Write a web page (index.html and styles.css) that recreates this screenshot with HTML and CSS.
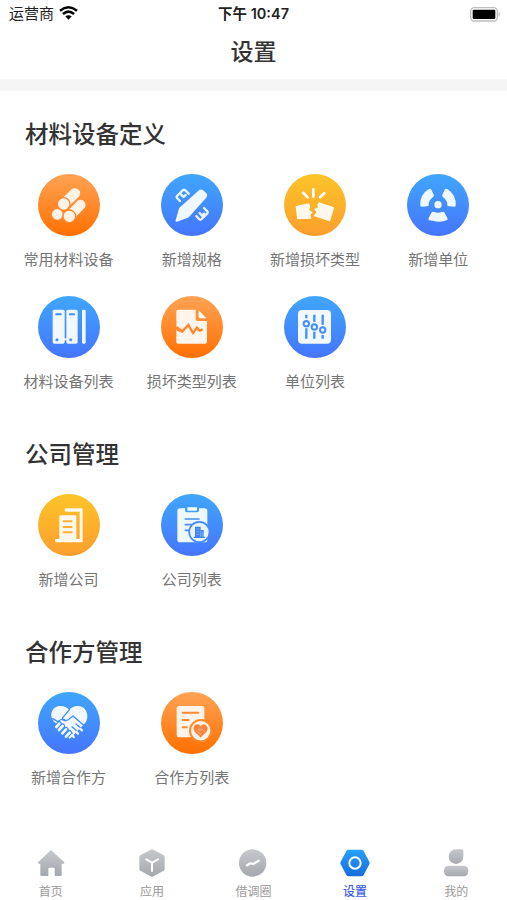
FILE: index.html
```html
<!DOCTYPE html>
<html lang="zh-CN">
<head>
<meta charset="utf-8">
<title>设置</title>
<link rel="stylesheet" href="styles.css">
</head>
<body>
<svg class="defs" width="0" height="0" aria-hidden="true">
  <defs>
    <linearGradient id="gray" x1="0" y1="0" x2="0" y2="1"><stop offset="0" stop-color="#c6c8cc"/><stop offset="1" stop-color="#a4a8ae"/></linearGradient>
    <linearGradient id="active" x1="0" y1="0" x2="0" y2="1"><stop offset="0" stop-color="#28a0fa"/><stop offset="1" stop-color="#176cdd"/></linearGradient>
  </defs>
</svg>
<div class="screen">
  <header>
    <div class="status">
      <div class="carrier"><span>运营商</span>
        <svg width="19" height="14" viewBox="0 0 57 42"><g fill="none" stroke="#000" stroke-width="7.5"><path d="M3 14Q28.500 -6 54 14"/><path d="M12 24Q28.500 10 45 24"/></g><path d="M19 31Q28.500 24 38 31L28.500 41Z"/></svg>
      </div>
      <div class="time">下午 10:47</div>
      <div class="battery"><svg width="31" height="15" viewBox="0 0 93 45"><rect x="2" y="2" width="80" height="40" rx="11" fill="#fff" stroke="#bdbdbd" stroke-width="4"/><rect x="8" y="8" width="68" height="28" rx="4"/><path d="M86 15q7 7 0 14z" fill="#aaa"/></svg></div>
    </div>
    <h1>设置</h1>
  </header>
  <main>
    <section>
      <h2>材料设备定义</h2>
      <div class="grid">
        <div class="item"><div class="disc orange"><svg viewBox="53 26 186 186">
          <g stroke-linecap="round" stroke="#fff3e8"><path d="M131 115L164 84" stroke-width="31"/><path d="M148 152L180 119" stroke-width="31"/></g>
          <g fill="#fff3e8" stroke="#ff8930" stroke-width="4"><circle cx="111" cy="147" r="18"/><circle cx="130" cy="116" r="19"/><circle cx="147" cy="153" r="19"/></g>
        </svg></div><span>常用材料设备</span></div>
        <div class="item"><div class="disc blue"><svg viewBox="61 26 186 186">
          <path d="M175 75q6-5 12 0l10 9q6 6 1 12l-51 57q-3 4-7 5l-31 11q-6 2-4-5l9-31q1-4 4-7z" fill="#f0f8ff"/>
          <g fill="none" stroke="#e8f4ff" stroke-width="7" stroke-linecap="round" stroke-linejoin="round"><path d="M118 107l-9-9q-3-3 0-6l17-17q4-4 8 0l10 10M121 87l8 8M129 95l6-6"/><path d="M190 128l10 10q3 3 0 6l-17 17q-4 4-8 0l-8-9M177 143l7 8M184 151l6-6"/></g>
        </svg></div><span>新增规格</span></div>
        <div class="item"><div class="disc yellow"><svg viewBox="67 26 186 186">
          <g fill="#fff8ee"><path d="M105 121l37-7 4 11-4 9 11 7-7 8 3 11-39 2q-3 0-4-3l-4-35q0-2 3-3z"/><path d="M172 111l41 13q4 1 4 5l-11 36q-1 4-5 2l-45-15 8-11-7-10 13-5-3-8z"/></g>
          <path d="M155 72v22M125 83l13 13M188 84l-13 12" stroke="#fff" stroke-width="8" stroke-linecap="round"/>
        </svg></div><span>新增损坏类型</span></div>
        <div class="item"><div class="disc blue"><svg viewBox="67 26 186 186">
          <g fill="#f0f8ff"><circle cx="160" cy="118" r="11"/><path d="M144 166q-6 0-10-1-5-2-2-7l8-15q3-5 8-3 12 4 24 0 5-2 8 3l8 15q3 5-2 7-18 8-42 1z"/><path d="M107 121q-3-32 25-50 5-3 8 2l7 15q2 4-2 7-13 9-13 24 0 4-5 4l-15 1q-5 0-5-3z"/><path d="M213 121q3-32-25-50-5-3-8 2l-7 15q-2 4 2 7 13 9 13 24 0 4 5 4l15 1q5 0 5-3z"/></g>
        </svg></div><span>新增单位</span></div>
        <div class="item"><div class="disc blue"><svg viewBox="70 24 186 186">
          <g fill="#f1f8ff"><rect x="114" y="65" width="36" height="102" rx="5"/><rect x="155" y="65" width="34" height="102" rx="5"/><rect x="202" y="65" width="11" height="102" rx="4"/><path d="M145 151h14v6h-14z"/></g>
          <g fill="#438ffc"><rect x="122" y="76" width="19" height="6" rx="1"/><rect x="163" y="76" width="18" height="6" rx="1"/><circle cx="127" cy="155" r="4.500"/><circle cx="168" cy="155" r="4.500"/></g>
        </svg></div><span>材料设备列表</span></div>
        <div class="item"><div class="disc orange"><svg viewBox="441 24 186 186">
          <path d="M492 65h53v29q0 5 5 5h29v63q0 5-5 5h-82q-5 0-5-5V70q0-5 5-5z" fill="#fff5ec"/><path d="M554 67v19q0 5 5 5h18z" fill="#fff"/>
          <path d="M487 117l18 13 18-19 14 24 12-16 8 9 9-4" fill="none" stroke="#ff8428" stroke-width="7"/><path d="M487 119l17 16-17-8z" fill="#ff8428"/>
        </svg></div><span>损坏类型列表</span></div>
        <div class="item"><div class="disc blue"><svg viewBox="66 24 186 186">
          <rect x="108" y="66" width="99" height="101" rx="12" fill="#f2f8ff"/>
          <path d="M133 80v11M133 121v31M157 80v21M157 131v21M182 80v30M182 141v11" stroke="#438ffc" stroke-width="7"/>
          <g fill="#f2f8ff" stroke="#438ffc" stroke-width="6"><circle cx="133" cy="107" r="8"/><circle cx="157" cy="117" r="8"/><circle cx="182" cy="126" r="8"/></g>
        </svg></div><span>单位列表</span></div>
      </div>
    </section>
    <section>
      <h2>公司管理</h2>
      <div class="grid">
        <div class="item"><div class="disc yellow"><svg viewBox="69 176 186 186">
          <path d="M153 219h46q4 0 4 4v98h-79q-4 0-4-4v-6h13v-67q0-4 4-4h43q4 0 4 4v67h10v-82h-41q-4 0-4-4v-2q0-4 4-4z" fill="#fff8ef"/>
          <path d="M146 258h24M146 275h24M146 291h24" stroke="#fcb12d" stroke-width="6" stroke-linecap="round"/>
        </svg></div><span>新增公司</span></div>
        <div class="item"><div class="disc blue"><svg viewBox="440 176 186 186">
          <path d="M497 219h15v6q0 6 6 6h30q6 0 6-6v-6h17q8 0 8 8v86q0 8-8 8h-74q-8 0-8-8v-86q0-8 8-8z" fill="#eff7ff"/><path d="M519 216h29v7q0 3-3 3h-23q-3 0-3-3z" fill="#f6fbff"/>
          <path d="M511 251h45M511 268h23M511 285h13" stroke="#438ffc" stroke-width="5"/>
          <circle cx="555" cy="290" r="33" fill="#438bfc"/><circle cx="555" cy="290" r="28" fill="#eaf3ff"/>
          <path d="M542 274h17v10h9v20h4v4h-34v-4h4z" fill="#3f84f2"/><path d="M546 281h9M546 289h9M546 297h9M559 287v17M564 290v14" stroke="#95bfff" stroke-width="2"/>
        </svg></div><span>公司列表</span></div>
      </div>
    </section>
    <section>
      <h2>合作方管理</h2>
      <div class="grid">
        <div class="item"><div class="disc blue"><svg viewBox="69 170 186 186">
          <path d="M163 224C150 207 119 207 111 228c-5 13-1 25 10 34l43 49 43-44c13-12 12-30 5-42-10-18-38-16-49-1z" fill="#f1f8ff"/>
          <path d="M164 222l-21 25q-3 6 4 8 10 3 18-6l9-7 32 28M113 250l15 9q15-12 22-5M183 266l16 14M171 274l15 14M158 281l14 14" fill="none" stroke="#438ffc" stroke-width="4" stroke-linecap="round" stroke-linejoin="round"/>
          <path d="M124 275l9-10M132 284l11-12M142 294l11-12M153 304l11-12" stroke="#438cfc" stroke-width="15" stroke-linecap="round"/>
          <path d="M124 275l9-10M132 284l11-12M142 294l11-12M153 304l11-12" stroke="#f1f8ff" stroke-width="8" stroke-linecap="round"/>
          <path d="M172 298l4 7M184 289l5 6M195 280l6 5" stroke="#f1f8ff" stroke-width="7" stroke-linecap="round"/>
        </svg></div><span>新增合作方</span></div>
        <div class="item"><div class="disc orange"><svg viewBox="440 170 186 186">
          <rect x="487" y="212" width="83" height="94" rx="7" fill="#fff4ea"/>
          <path d="M505 232h47M505 254h18M505 276h12" stroke="#ff8930" stroke-width="6" stroke-linecap="round"/>
          <circle cx="559" cy="286" r="35" fill="#ff892e"/><circle cx="559" cy="286" r="29" fill="#fff4ea"/>
          <path d="M559 272c-9-11-23-3-21 9 1 10 12 15 21 26 9-11 20-16 21-26 1-12-14-19-21-9z" fill="#f9843c"/><path d="M546 286l15 13M559 277l-7 7q6 4 11-3l10 10" stroke="#ffc79c" stroke-width="2" fill="none"/>
        </svg></div><span>合作方列表</span></div>
      </div>
    </section>
  </main>
  <nav>
    <div class="tab"><svg viewBox="0 0 90 90"><path d="M45 6L85 43q2 4-3 4h-5v33q0 4-4 4H56V62q0-3-3-3H40q-3 0-3 3v22H17q-4 0-4-4V47H9q-5 0-3-4z" fill="url(#gray)"/></svg><span>首页</span></div>
    <div class="tab"><svg viewBox="0 0 90 90"><path d="M41 5q4-2 8 0l30 16q4 2 4 7v34q0 5-4 7L49 85q-4 2-8 0L11 69q-4-2-4-7V28q0-5 4-7z" fill="url(#gray)"/><path d="M28 34l17 10 18-10M45 44v25" fill="none" stroke="#fff" stroke-width="6" stroke-linecap="round"/></svg><span>应用</span></div>
    <div class="tab"><svg viewBox="0 0 90 90"><circle cx="44" cy="45" r="41" fill="url(#gray)"/><path d="M27 52q8-7 13-6 5 3 9 0l13-8" fill="none" stroke="#fff" stroke-width="7" stroke-linecap="round"/></svg><span>借调圈</span></div>
    <div class="tab on"><svg viewBox="0 0 90 90"><path d="M25 5h40q4 0 6 4l17 32q2 4 0 8L71 81q-2 4-6 4H25q-4 0-6-4L2 49q-2-4 0-8L19 9q2-4 6-4z" fill="url(#active)"/><circle cx="45" cy="45" r="17" fill="none" stroke="#fff" stroke-width="6"/></svg><span>设置</span></div>
    <div class="tab"><svg viewBox="0 0 90 90"><path d="M45 4h18q4 0 4 4v18A22 22 0 1 1 45 4z" fill="url(#gray)"/><rect x="9" y="53" width="73" height="32" rx="14" fill="url(#gray)"/></svg><span>我的</span></div>
  </nav>
</div>
</body>
</html>
```
FILE: styles.css
```css
* { box-sizing: border-box; }
body {
  margin: 0;
  background: #fff;
  color: #333;
  font-family: Inter, "Noto Sans CJK SC", sans-serif;
}
.defs { display: block; }
.screen {
  height: 900px;
  display: flex;
  flex-direction: column;
  overflow: hidden;
}
header {
  height: 91px;
  border-bottom: 12px solid #f5f5f5;
}
.status {
  height: 27px;
  padding: 0 6px 0 9px;
  display: grid;
  grid-template-columns: 1fr auto 1fr;
  align-items: center;
  color: #222;
}
.carrier {
  display: flex;
  align-items: center;
  gap: 5px;
  font-size: 15px;
  line-height: 28px;
}
.carrier svg { margin-top: -2px; }
.time {
  margin-right: 3px;
  font-size: 14.5px;
  font-weight: 600;
  line-height: 28px;
}
.battery {
  display: flex;
  justify-content: flex-end;
}
h1 {
  margin: 8px 0 0;
  font-size: 23px;
  line-height: 35px;
  font-weight: 500;
  text-align: center;
}
main { flex: 1; }
section { padding: 27px 7px 19px; }
h2 {
  margin: 0 0 22px 18px;
  font-size: 23.5px;
  line-height: 34px;
  font-weight: 500;
}
.grid {
  display: grid;
  grid-template-columns: repeat(4, 1fr);
  row-gap: 26px;
}
.item {
  display: flex;
  flex-direction: column;
  align-items: center;
  gap: 14px;
  font-size: 15px;
  line-height: 20px;
  color: #757575;
  white-space: nowrap;
}
.disc {
  width: 62px;
  height: 62px;
  border-radius: 50%;
}
.disc svg {
  display: block;
  width: 62px;
  height: 62px;
}
.orange { background: linear-gradient(#ffa355, #ff7000); }
.blue { background: linear-gradient(#40a6fd, #4575fd); }
.yellow { background: linear-gradient(#fdc42a, #fc9e2d); }
nav {
  height: 56px;
  display: grid;
  grid-template-columns: repeat(5, 1fr);
}
.tab {
  display: flex;
  flex-direction: column;
  align-items: center;
  padding-top: 4px;
  gap: 5px;
  font-size: 12px;
  line-height: 18px;
  color: #999;
}
.tab svg {
  width: 30px;
  height: 30px;
}
.on { color: #3c62ea; font-weight: 500; }
```
